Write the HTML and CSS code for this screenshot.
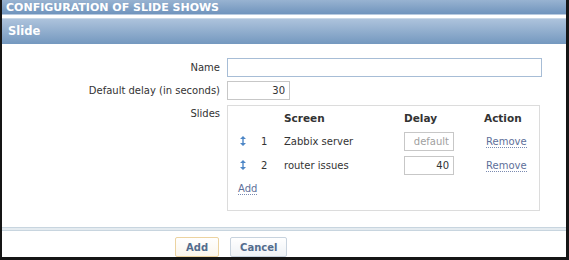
FILE: index.html
```html
<!DOCTYPE html>
<html lang="en">
<head>
  <meta charset="UTF-8" />
  <title>Configuration of slide shows</title>
  <link rel="stylesheet" href="styles.css">
</head>
<body>
  <div class="window">
    <div class="page-title">CONFIGURATION OF SLIDE SHOWS</div>
    <div class="form-title">Slide</div>

    <div class="form">
      <label class="label" for="name">Name</label>
      <div><input type="text" class="input input-name" id="name" /></div>

      <label class="label" for="delay">Default delay (in seconds)</label>
      <div><input type="text" class="input input-num" id="delay" value="30" /></div>

      <div class="label">Slides</div>
      <div class="slides">
        <div class="slides-row slides-head">
          <div></div>
          <div></div>
          <div>Screen</div>
          <div>Delay</div>
          <div>Action</div>
        </div>
        <div class="slides-row">
          <div><svg class="drag" width="6" height="10" viewBox="0 0 6 10"><path d="M3 0L6 3H0Z M3 10L0 7H6Z" fill="#4d86c6"/><rect x="2.3" y="2" width="1.4" height="6" fill="#4d86c6"/></svg></div>
          <div class="num">1</div>
          <div>Zabbix server</div>
          <div><input type="text" class="input input-delay" placeholder="default" /></div>
          <div><a class="link">Remove</a></div>
        </div>
        <div class="slides-row">
          <div><svg class="drag" width="6" height="10" viewBox="0 0 6 10"><path d="M3 0L6 3H0Z M3 10L0 7H6Z" fill="#4d86c6"/><rect x="2.3" y="2" width="1.4" height="6" fill="#4d86c6"/></svg></div>
          <div class="num">2</div>
          <div>router issues</div>
          <div><input type="text" class="input input-delay" value="40" /></div>
          <div><a class="link">Remove</a></div>
        </div>
        <div class="slides-add"><a class="link">Add</a></div>
      </div>
    </div>

    <div class="separator"></div>

    <div class="buttons">
      <button class="btn btn-main">Add</button>
      <button class="btn">Cancel</button>
    </div>
  </div>
</body>
</html>
```

FILE: styles.css
```css
* { margin: 0; padding: 0; box-sizing: border-box; }

body {
  font-family: "DejaVu Sans", Verdana, sans-serif;
  font-size: 10px;
  color: #333;
  background: #fff;
}

.window {
  width: 569px;
  height: 260px;
  border-left: 2px solid #151515;
  border-right: 3px solid #151515;
  border-bottom: 3px solid #151515;
  background: #fff;
}

.page-title {
  height: 15px;
  line-height: 15px;
  padding-left: 4px;
  font-size: 11px;
  font-weight: bold;
  color: #fff;
  background: linear-gradient(#98b3d1, #7094bd);
  border-bottom: 1px solid #b9cbe0;
}

.form-title {
  height: 26px;
  margin-top: 3px;
  line-height: 25px;
  padding-left: 6px;
  font-size: 11.5px;
  font-weight: bold;
  color: #fff;
  background: linear-gradient(#adc3dc, #7498bf);
  border-top: 1px solid #c9d7e6;
}

.form {
  display: grid;
  grid-template-columns: 218px 1fr;
  column-gap: 7px;
  row-gap: 4px;
  padding-top: 14px;
}

.label {
  text-align: right;
  padding-top: 4px;
}

.input {
  height: 19px;
  border: 1px solid #c7c7c7;
  font-family: inherit;
  font-size: 10px;
  color: #333;
  padding: 0 4px;
  text-align: right;
}

.input-name {
  width: 315px;
  border-color: #a7bdd6;
}

.input-num { width: 63px; }

.input-delay { width: 50px; }

.input-delay::placeholder { color: #a0a0a0; opacity: 1; }

.slides {
  width: 313px;
  margin-top: 1px;
  border: 1px solid #dcdcdc;
  padding: 0 0 9px 10px;
}

.slides-row {
  display: grid;
  grid-template-columns: 20px 26px 120px 80px 1fr;
  align-items: center;
  height: 24px;
}

.slides-head {
  height: 23px;
  font-weight: bold;
  font-size: 10.5px;
}

.drag { display: block; margin-left: 2px; }

.num { padding-left: 3px; }

.link {
  color: #5e6f9a;
  border-bottom: 1px dotted #7a8ab0;
  cursor: pointer;
}

.slides-row .link { margin-left: 2px; }

.slides-add {
  height: 24px;
  line-height: 24px;
}

.separator {
  margin-top: 16px;
  height: 4px;
  border-top: 1px solid #c8d5df;
  border-bottom: 1px solid #c8d5df;
  background: #e4ebf0;
}

.buttons {
  display: flex;
  gap: 11px;
  padding: 6px 0 0 173px;
}

.btn {
  height: 20px;
  padding: 0 9px;
  font-family: inherit;
  font-size: 10px;
  font-weight: bold;
  color: #536c8d;
  background: linear-gradient(#fff, #eef2f6);
  border: 1px solid #c8d3de;
  border-radius: 2px;
}

.btn-main {
  padding: 0 10px;
  border-color: #ecd3a0;
  background: linear-gradient(#fff, #fbf6ec);
}
```
